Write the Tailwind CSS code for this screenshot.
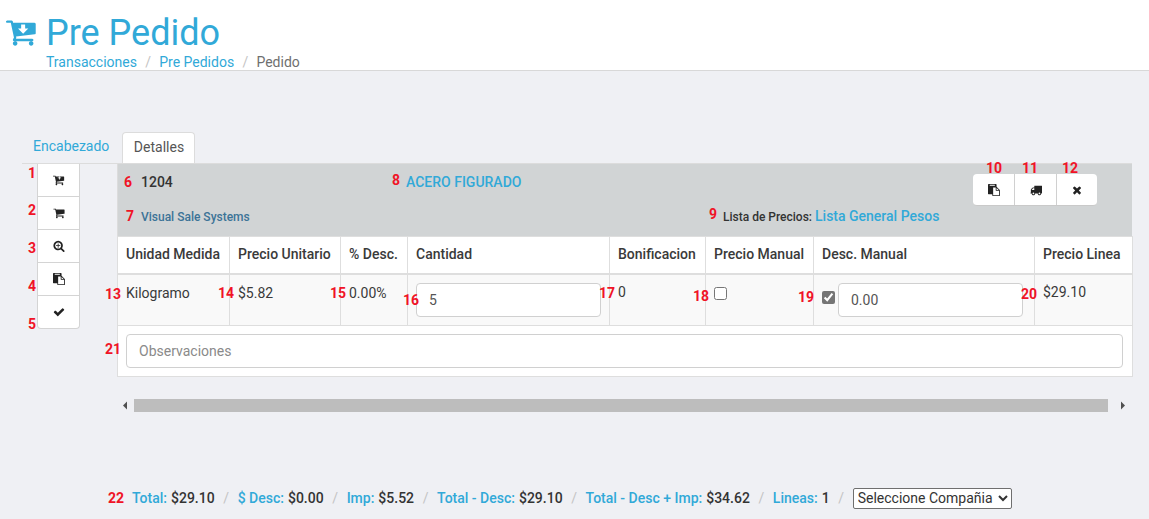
<!DOCTYPE html>
<html lang="es">
<head>
    <meta charset="UTF-8">
    <title>Pre Pedido</title>
    <script src="https://cdn.jsdelivr.net/npm/@tailwindcss/browser@4"></script>
</head>
<body class="bg-[#eff0f4] font-[Roboto,sans-serif] text-[14px] text-[#3a3a3a] w-[1149px] h-[519px] overflow-hidden">

    <!-- page header -->
    <header class="h-[71px] bg-white border-b border-[#d8d8d8] relative pl-[46px]">
        <svg class="absolute left-[6px] top-[16px] w-[32px] h-[32px] text-[#31a9d8]" viewBox="0 0 1792 1792" fill="currentColor" fill-rule="evenodd"><path d="M640 1536q0 52-38 90t-90 38-90-38-38-90 38-90 90-38 90 38 38 90zm896 0q0 52-38 90t-90 38-90-38-38-90 38-90 90-38 90 38 38 90zm128-1088v512q0 24-16 42.5t-41 21.5l-1044 122q1 7 4.5 21.5t6 26.5 2.5 22q0 16-24 64h920q26 0 45 19t19 45-19 45-45 19h-1024q-26 0-45-19t-19-45q0-14 11-39.5t29.5-59.5 20.5-38l-177-823h-204q-26 0-45-19t-19-45 19-45 45-19h256q16 0 28.5 6.5t20 15.5 13 24.5 7.5 26.5 5.5 29.5 4.5 25.5h1201q26 0 45 19t19 45z M960 992l-288-288h176v-224h224v224h176z"/></svg>
        <h1 class="text-[36px] leading-[40px] pt-[13px] text-[#31a9d8]">Pre Pedido</h1>
        <nav class="flex items-center text-[14px] leading-[20px] mt-[-1px]">
            <a class="text-[#31a9d8]">Transacciones</a>
            <span class="text-[#c4c4c4] px-[8.25px]">/</span>
            <a class="text-[#31a9d8]">Pre Pedidos</a>
            <span class="text-[#c4c4c4] px-[8.25px]">/</span>
            <span class="text-[#6f6f6f]">Pedido</span>
        </nav>
    </header>

    <!-- tabs -->
    <div class="mt-[61px] ml-[22px] w-[1110px] h-[32px] flex items-end border-b border-[#dcdcdc]">
        <a class="pl-[11px] pr-[13px] h-[31px] leading-[29px] text-[#31a9d8]">Encabezado</a>
        <a class="w-[73px] pl-[10.5px] h-[31px] leading-[29px] bg-white border border-b-0 border-[#dcdcdc] rounded-t-[4px] text-[#555]">Detalles</a>
    </div>

    <div class="flex pl-[37px]">
        <!-- side buttons -->
        <div class="w-[43px] h-[165px] bg-white border border-t-0 border-[#d4d4d4] rounded-b-[4px] flex flex-col text-[#222]">
            <button class="relative h-[33px] flex items-center justify-center border-b border-[#d4d4d4]">
                <span class="absolute left-[-10px] top-[1px] text-[14px] leading-[16px] font-bold text-[#f01326]">1</span>
                <svg class="w-[12px] h-[12px]" viewBox="0 0 1792 1792" fill="currentColor"><path d="M1216 576q0-26-19-45t-45-19h-128v-128q0-26-19-45t-45-19-45 19-19 45v128h-128q-26 0-45 19t-19 45 19 45 45 19h128v128q0 26 19 45t45 19 45-19 19-45v-128h128q26 0 45-19t19-45zm-576 960q0 52-38 90t-90 38-90-38-38-90 38-90 90-38 90 38 38 90zm896 0q0 52-38 90t-90 38-90-38-38-90 38-90 90-38 90 38 38 90zm128-1088v512q0 24-16 42.5t-41 21.5l-1044 122q1 7 4.5 21.5t6 26.5 2.5 22q0 16-24 64h920q26 0 45 19t19 45-19 45-45 19h-1024q-26 0-45-19t-19-45q0-14 11-39.5t29.5-59.5 20.5-38l-177-823h-204q-26 0-45-19t-19-45 19-45 45-19h256q16 0 28.5 6.5t20 15.5 13 24.5 7.5 26.5 5.5 29.5 4.5 25.5h1201q26 0 45 19t19 45z" fill-rule="evenodd"/></svg>
            </button>
            <button class="relative h-[33px] flex items-center justify-center border-b border-[#d4d4d4]">
                <span class="absolute left-[-10px] top-[5px] text-[14px] leading-[16px] font-bold text-[#f01326]">2</span>
                <svg class="w-[12px] h-[12px]" viewBox="0 0 1792 1792" fill="currentColor"><path d="M704 1536q0 52-38 90t-90 38-90-38-38-90 38-90 90-38 90 38 38 90zm896 0q0 52-38 90t-90 38-90-38-38-90 38-90 90-38 90 38 38 90zm128-1088v512q0 24-16.5 42.5t-40.5 21.5l-1044 122q13 60 13 70 0 16-24 64h920q26 0 45 19t19 45-19 45-45 19h-1024q-26 0-45-19t-19-45q0-11 8-31.5t16-36 21.5-40 15.5-29.5l-177-823h-204q-26 0-45-19t-19-45 19-45 45-19h256q16 0 28.5 6.5t19.5 15.5 13 24.5 8 26 5.5 29.5 4.5 26h1201q26 0 45 19t19 45z"/></svg>
            </button>
            <button class="relative h-[33px] flex items-center justify-center border-b border-[#d4d4d4]">
                <span class="absolute left-[-10px] top-[10px] text-[14px] leading-[16px] font-bold text-[#f01326]">3</span>
                <svg class="w-[12px] h-[12px]" viewBox="0 0 1792 1792" fill="currentColor"><path d="M1088 800v64q0 13-9.5 22.5t-22.5 9.5h-224v224q0 13-9.5 22.5t-22.5 9.5h-64q-13 0-22.5-9.5t-9.5-22.5v-224h-224q-13 0-22.5-9.5t-9.5-22.5v-64q0-13 9.5-22.5t22.5-9.5h224v-224q0-13 9.5-22.5t22.5-9.5h64q13 0 22.5 9.5t9.5 22.5v224h224q13 0 22.5 9.5t9.5 22.5zm128 32q0-185-131.5-316.5t-316.5-131.5-316.5 131.5-131.5 316.5 131.5 316.5 316.5 131.5 316.5-131.5 131.5-316.5zm512 832q0 53-37.5 90.5t-90.5 37.5q-54 0-90-38l-343-342q-179 124-399 124-143 0-273.5-55.5t-225-150-150-225-55.5-273.5 55.5-273.5 150-225 225-150 273.5-55.5 273.5 55.5 225 150 150 225 55.5 273.5q0 220-124 399l343 343q37 37 37 90z"/></svg>
            </button>
            <button class="relative h-[33px] flex items-center justify-center border-b border-[#d4d4d4]">
                <span class="absolute left-[-10px] top-[15px] text-[14px] leading-[16px] font-bold text-[#f01326]">4</span>
                <svg class="w-[12px] h-[12px]" viewBox="0 0 1792 1792" fill="currentColor"><path d="M768 1664h896v-640h-416q-40 0-68-28t-28-68v-416h-384v1152zm256-1440v-64q0-13-9.5-22.5t-22.5-9.5h-704q-13 0-22.5 9.5t-9.5 22.5v64q0 13 9.5 22.5t22.5 9.5h704q13 0 22.5-9.5t9.5-22.5zm256 672h299l-299-299v299zm512 128v672q0 40-28 68t-68 28h-960q-40 0-68-28t-28-68v-160h-544q-40 0-68-28t-28-68v-1344q0-40 28-68t68-28h1088q40 0 68 28t28 68v328q21 13 36 28l408 408q28 28 48 76t20 88z"/></svg>
            </button>
            <button class="relative h-[32px] flex items-center justify-center">
                <span class="absolute left-[-10px] top-[20px] text-[14px] leading-[16px] font-bold text-[#f01326]">5</span>
                <svg class="w-[12px] h-[12px]" viewBox="0 0 1792 1792" fill="currentColor"><path d="M1671 566q0 40-28 68l-724 724-136 136q-28 28-68 28t-68-28l-136-136-362-362q-28-28-28-68t28-68l136-136q28-28 68-28t68 28l294 295 656-657q28-28 68-28t68 28l136 136q28 28 28 68z"/></svg>
            </button>
        </div>

        <div class="ml-[37px] w-[1015px]">
            <!-- order summary -->
            <div class="relative h-[72px] bg-[#d1d4d5] pl-[23px] border-l border-[#dcdcdc]">
                <div class="flex h-[37px] items-center">
                    <span class="relative w-[265px] text-[14px] font-medium text-[#333]">
                        <span class="absolute left-[-17px] top-[0px] font-bold text-[#f01326]">6</span>1204
                    </span>
                    <span class="relative text-[14px] font-medium text-[#31a9d8]">
                        <span class="absolute left-[-14px] top-[-2px] font-bold text-[#f01326]">8</span>ACERO FIGURADO
                    </span>
                </div>
                <div class="flex h-[31px] items-center">
                    <span class="relative w-[582px] text-[12px] font-medium text-[#3c7397]">
                        <span class="absolute left-[-15px] top-[-2px] text-[14px] font-bold text-[#f01326]">7</span>Visual Sale Systems
                    </span>
                    <span class="relative text-[12px] font-medium text-[#333]">
                        <span class="absolute left-[-14px] top-[-2px] text-[14px] font-bold text-[#f01326]">9</span>Lista de Precios: <span class="text-[14px] text-[#31a9d8]">Lista General Pesos</span>
                    </span>
                </div>
                <div class="absolute left-[855px] top-[10px] w-[124px] h-[32px] flex bg-white rounded-[4px] border-b border-[#c9c9c9] text-[#222]">
                    <button class="relative w-[42px] flex items-center justify-center border-r border-[#d0d0d0]">
                        <span class="absolute left-[13px] top-[-16px] font-bold text-[#f01326]">10</span>
                        <svg class="w-[12px] h-[12px]" viewBox="0 0 1792 1792" fill="currentColor"><path d="M768 1664h896v-640h-416q-40 0-68-28t-28-68v-416h-384v1152zm256-1440v-64q0-13-9.5-22.5t-22.5-9.5h-704q-13 0-22.5 9.5t-9.5 22.5v64q0 13 9.5 22.5t22.5 9.5h704q13 0 22.5-9.5t9.5-22.5zm256 672h299l-299-299v299zm512 128v672q0 40-28 68t-68 28h-960q-40 0-68-28t-28-68v-160h-544q-40 0-68-28t-28-68v-1344q0-40 28-68t68-28h1088q40 0 68 28t28 68v328q21 13 36 28l408 408q28 28 48 76t20 88z"/></svg>
                    </button>
                    <button class="relative w-[42px] flex items-center justify-center border-r border-[#d0d0d0]">
                        <span class="absolute left-[7px] top-[-16px] font-bold text-[#f01326]">11</span>
                        <svg class="w-[12px] h-[12px]" viewBox="0 0 1792 1792" fill="currentColor"><path d="M640 1408q0-52-38-90t-90-38-90 38-38 90 38 90 90 38 90-38 38-90zm-384-512h384v-256h-158q-13 0-22 9l-195 195q-9 9-9 22v30zm1280 512q0-52-38-90t-90-38-90 38-38 90 38 90 90 38 90-38 38-90zm256-1088v1024q0 15-4 26.5t-13.5 18.5-16.5 11.5-23.5 6-22.5 2-25.5 0-22.5-.5q0 106-75 181t-181 75-181-75-75-181h-384q0 106-75 181t-181 75-181-75-75-181h-64q-3 0-22.5.5t-25.5 0-22.5-2-23.5-6-16.5-11.5-13.5-18.5-4-26.5q0-26 19-45t45-19v-320q0-8-.5-35t0-38 2.5-34.5 6.5-37 14-30.5 22.5-30l198-198q19-19 50.5-32t58.5-13h160v-192q0-26 19-45t45-19h1024q26 0 45 19t19 45z"/></svg>
                    </button>
                    <button class="relative flex-1 flex items-center justify-center">
                        <span class="absolute left-[5px] top-[-16px] font-bold text-[#f01326]">12</span>
                        <svg class="w-[12px] h-[12px]" viewBox="0 0 1792 1792" fill="currentColor"><path d="M1490 1322q0 40-28 68l-136 136q-28 28-68 28t-68-28l-294-294-294 294q-28 28-68 28t-68-28l-136-136q-28-28-28-68t28-68l294-294-294-294q-28-28-28-68t28-68l136-136q28-28 68-28t68 28l294 294 294-294q28-28 68-28t68 28l136 136q28 28 28 68t-28 68l-294 294 294 294q28 28 28 68z"/></svg>
                    </button>
                </div>
            </div>

            <!-- detail table -->
            <table class="w-[1015px] table-fixed border-collapse bg-white border border-[#dedede]">
                <colgroup>
                    <col class="w-[112px]"><col class="w-[111px]"><col class="w-[67px]"><col class="w-[202px]"><col class="w-[96px]"><col class="w-[108px]"><col class="w-[221px]"><col class="w-[98px]">
                </colgroup>
                <thead>
                    <tr class="h-[37px] text-left font-medium border-b-2 border-[#dedede]">
                        <th class="px-[8px] font-medium border-r border-[#dedede]">Unidad Medida</th>
                        <th class="px-[8px] font-medium border-r border-[#dedede]">Precio Unitario</th>
                        <th class="px-[8px] font-medium border-r border-[#dedede]">% Desc.</th>
                        <th class="px-[8px] font-medium border-r border-[#dedede]">Cantidad</th>
                        <th class="px-[8px] font-medium border-r border-[#dedede]">Bonificacion</th>
                        <th class="px-[8px] font-medium border-r border-[#dedede]">Precio Manual</th>
                        <th class="px-[8px] font-medium border-r border-[#dedede]">Desc. Manual</th>
                        <th class="px-[8px] font-medium">Precio Linea</th>
                    </tr>
                </thead>
                <tbody>
                    <tr class="h-[52px] bg-[#f9f9f9] border-b border-[#dedede] align-top">
                        <td class="relative px-[8px] pt-[8px] border-r border-[#dedede]"><span class="absolute left-[-13px] top-[9px] font-bold text-[#f01326]">13</span>Kilogramo</td>
                        <td class="relative px-[8px] pt-[8px] border-r border-[#dedede]"><span class="absolute left-[-12px] top-[8px] font-bold text-[#f01326]">14</span>$5.82</td>
                        <td class="relative px-[8px] pt-[8px] border-r border-[#dedede]"><span class="absolute left-[-11px] top-[8px] font-bold text-[#f01326]">15</span>0.00%</td>
                        <td class="relative px-[8px] pt-[8px] border-r border-[#dedede]">
                            <span class="absolute left-[-5px] top-[15px] font-bold text-[#f01326]">16</span>
                            <input type="text" value="5" class="block w-[185px] h-[34px] bg-white border border-[#d0d0d0] rounded-[4px] px-[12px] text-[#555]">
                        </td>
                        <td class="relative px-[8px] pt-[7px] border-r border-[#dedede]"><span class="absolute left-[-11px] top-[8px] font-bold text-[#f01326]">17</span>0</td>
                        <td class="relative px-[8px] pt-[12px] border-r border-[#dedede]">
                            <span class="absolute left-[-13px] top-[11px] font-bold text-[#f01326]">18</span>
                            <input type="checkbox" class="block w-[13px] h-[13px] m-0">
                        </td>
                        <td class="relative px-[8px] pt-[8px] border-r border-[#dedede]">
                            <span class="absolute left-[-16px] top-[12px] font-bold text-[#f01326]">19</span>
                            <div class="flex items-start gap-[3px]">
                                <input type="checkbox" checked class="w-[13px] h-[13px] mt-[8px] accent-[#757575]">
                                <input type="text" value="0.00" class="block w-[185px] h-[34px] bg-white border border-[#d0d0d0] rounded-[4px] px-[12px] text-[#555]">
                            </div>
                        </td>
                        <td class="relative px-[8px] pt-[7px]"><span class="absolute left-[-14px] top-[9px] font-bold text-[#f01326]">20</span>$29.10</td>
                    </tr>
                    <tr class="h-[51px]">
                        <td colspan="8" class="relative px-[8px]">
                            <span class="absolute left-[-13px] top-[13px] font-bold text-[#f01326]">21</span>
                            <input type="text" placeholder="Observaciones" class="block w-[997px] h-[34px] bg-white border border-[#d0d0d0] rounded-[4px] px-[12px] placeholder:text-[#8a8a8a]">
                        </td>
                    </tr>
                </tbody>
            </table>

            <!-- horizontal scrollbar -->
            <div class="mt-[22px] h-[13px] flex items-center">
                <svg class="w-[17px] h-[13px] text-[#505050]" viewBox="0 0 17 13" fill="currentColor"><path d="M6 6.5 10 2.5v8z"/></svg>
                <div class="w-[975px] h-[13px] bg-[#bdbdbd]"></div>
                <svg class="w-[17px] h-[13px] text-[#505050] ml-[7px]" viewBox="0 0 17 13" fill="currentColor"><path d="M6 2.5 10 6.5 6 10.5z"/></svg>
            </div>
        </div>
    </div>

    <!-- totals -->
    <div class="mt-[76px] ml-[108px] h-[20px] flex items-center font-medium relative">
        <span class="w-[24px] font-bold text-[#f01326]">22</span>
        <span class="text-[#31a9d8]">Total:</span><span class="ml-[4px] text-[#333]">$29.10</span>
        <span class="text-[#c4c4c4] font-normal px-[8.6px]">/</span>
        <span class="text-[#31a9d8]">$ Desc:</span><span class="ml-[4px] text-[#333]">$0.00</span>
        <span class="text-[#c4c4c4] font-normal px-[8.6px]">/</span>
        <span class="text-[#31a9d8]">Imp:</span><span class="ml-[4px] text-[#333]">$5.52</span>
        <span class="text-[#c4c4c4] font-normal px-[8.6px]">/</span>
        <span class="text-[#31a9d8]">Total - Desc:</span><span class="ml-[4px] text-[#333]">$29.10</span>
        <span class="text-[#c4c4c4] font-normal px-[8.6px]">/</span>
        <span class="text-[#31a9d8]">Total - Desc + Imp:</span><span class="ml-[4px] text-[#333]">$34.62</span>
        <span class="text-[#c4c4c4] font-normal px-[8.6px]">/</span>
        <span class="text-[#31a9d8]">Lineas:</span><span class="ml-[4px] text-[#333]">1</span>
        <span class="text-[#c4c4c4] font-normal px-[8.6px]">/</span>
        <select class="w-[159px] h-[21px] bg-white border border-[#6f6f6f] rounded-[2px] font-normal text-[#333] text-[14px] appearance-auto">
            <option>Seleccione Compañia</option>
        </select>
    </div>
</body>
</html>
